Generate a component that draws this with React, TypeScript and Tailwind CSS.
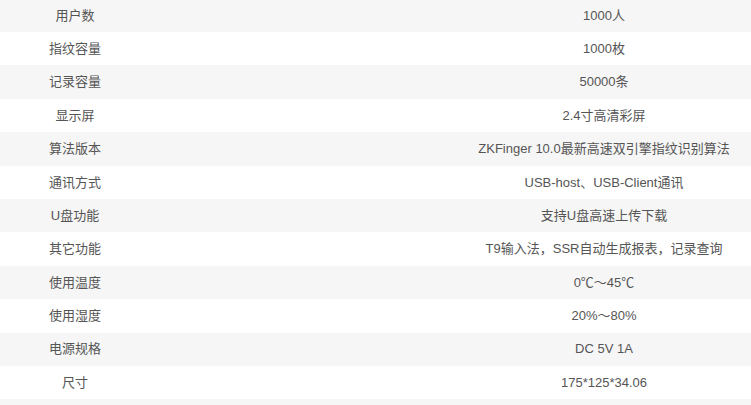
const rows: [string, string][] = [
  ['用户数', '1000人'],
  ['指纹容量', '1000枚'],
  ['记录容量', '50000条'],
  ['显示屏', '2.4寸高清彩屏'],
  ['算法版本', 'ZKFinger 10.0最新高速双引擎指纹识别算法'],
  ['通讯方式', 'USB-host、USB-Client通讯'],
  ['U盘功能', '支持U盘高速上传下载'],
  ['其它功能', 'T9输入法，SSR自动生成报表，记录查询'],
  ['使用温度', '0℃～45℃'],
  ['使用湿度', '20%～80%'],
  ['电源规格', 'DC 5V 1A'],
  ['尺寸', '175*125*34.06'],
]

export default function App() {
  return (
    <div className="w-[751px] h-[405px] overflow-hidden bg-white font-['Liberation_Sans','Noto_Sans_CJK_SC',sans-serif] text-[13px] text-[#555]">
      <div className="-mt-[1.4px]">
        {rows.map(([label, value], i) => (
          <div
            key={label}
            className={`flex h-[33.4px] items-center ${i % 2 === 0 ? 'bg-[#f6f6f6]' : 'bg-white'}`}
          >
            <div className="w-[150px] text-center">{label}</div>
            <div className="ml-auto w-[294px] text-center whitespace-nowrap">{value}</div>
          </div>
        ))}
        <div className="h-[33.4px] bg-[#f6f6f6]" />
      </div>
    </div>
  )
}
